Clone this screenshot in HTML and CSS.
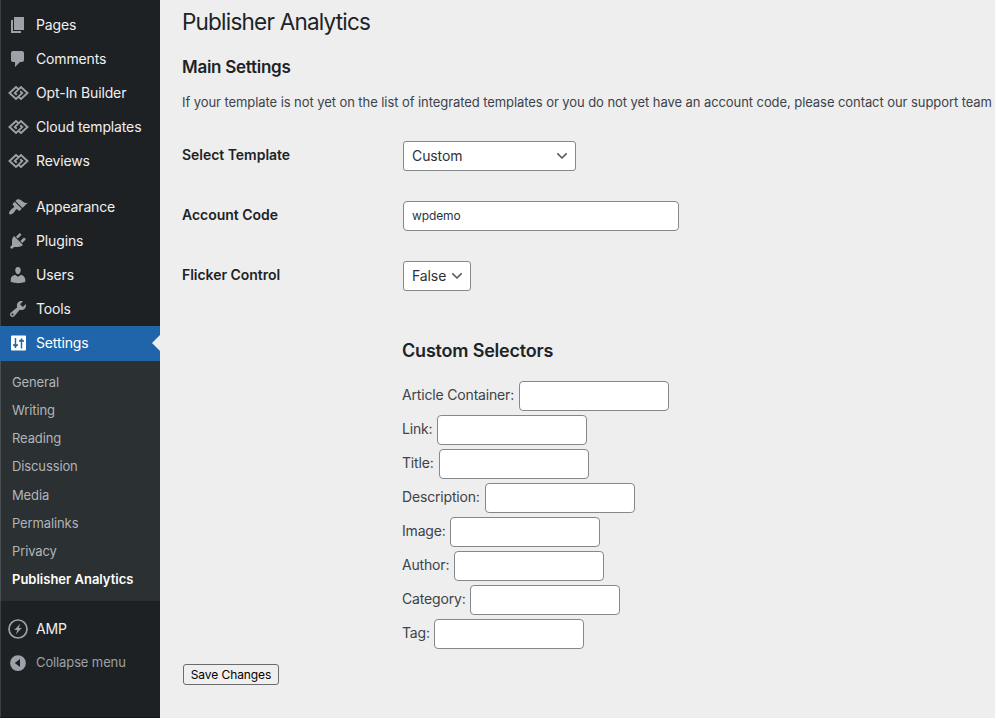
FILE: index.html
```html
<!DOCTYPE html>
<html lang="en">
<head>
<meta charset="utf-8">
<title>Publisher Analytics</title>
<link rel="stylesheet" href="styles.css">
</head>
<body>
<svg class="defs" width="0" height="0">
  <symbol id="links" viewBox="0 0 21 20"><path d="M10.300 6 8 4.100 1.500 10 8 15.900 14.200 10.100 12.200 8.300M10.700 14 13 15.900 19.500 10 13 4.100 6.800 9.900 8.800 11.700" fill="none" stroke="currentColor" stroke-width="1.900"/></symbol>
  <symbol id="chevron" viewBox="0 0 20 20"><path d="m4.200 6.700 5.800 5.800 5.800-5.800" fill="none" stroke="#50575e" stroke-width="1.900"/></symbol>
</svg>
<div class="admin">
  <nav class="sidebar">
    <ul class="menu">
      <li><svg class="icon" viewBox="0 0 20 20"><path d="M6 15V2h10v13H6zm-1 1h8v2H3V5h2v11z"/></svg><span>Pages</span></li>
      <li><svg class="icon" viewBox="0 0 20 20"><path d="M5 2h9c1.100 0 2 .9 2 2v7c0 1.100-.9 2-2 2h-2l-5 5v-5H5c-1.100 0-2-.9-2-2V4c0-1.100.9-2 2-2z"/></svg><span>Comments</span></li>
      <li><svg class="icon links"><use href="#links"/></svg><span>Opt-In Builder</span></li>
      <li><svg class="icon links"><use href="#links"/></svg><span>Cloud templates</span></li>
      <li><svg class="icon links"><use href="#links"/></svg><span>Reviews</span></li>
      <li class="gap"><svg class="icon" viewBox="0 0 20 20"><path d="M14.480 11.060 7.410 3.990l1.500-1.500c.5-.56 2.300-.47 3.510.32 1.210.8 1.430 1.280 2.910 2.100 1.180.64 2.450 1.260 4.450.85zm-.71.71L6.700 4.700 4.930 6.470c-.39.39-.39 1.020 0 1.410l1.060 1.060c.39.39.39 1.030 0 1.420-.6.6-1.430 1.110-2.210 1.690-.35.26-.7.53-1.010.84C1.430 14.230.4 16.080 1.400 17.070c.99 1 2.840-.03 4.180-1.360.31-.31.58-.66.85-1.020.57-.78 1.080-1.610 1.690-2.210.39-.39 1.020-.39 1.410 0l1.060 1.060c.39.39 1.020.39 1.410 0z"/></svg><span>Appearance</span></li>
      <li><svg class="icon" viewBox="0 0 20 20"><path d="M13.110 4.360 9.870 7.600 8 5.730l3.240-3.240c.35-.34 1.050-.2 1.560.32.52.51.66 1.210.31 1.550zm-8 1.770.91-1.120 9.010 9.010-1.190.84c-.71.71-2.630 1.160-3.820 1.160H6.140L4.900 17.260c-.59.59-1.540.59-2.120 0-.59-.58-.59-1.530 0-2.120l1.240-1.240v-3.880c0-1.130.4-3.190 1.090-3.890zm7.260 3.970 3.240-3.240c.34-.35 1.040-.21 1.550.31.52.51.66 1.210.31 1.550l-3.240 3.250z"/></svg><span>Plugins</span></li>
      <li><svg class="icon" viewBox="0 0 20 20"><path d="M10 9.250c-2.270 0-2.730-3.440-2.730-3.440C7 4.020 7.820 2 9.970 2c2.160 0 2.980 2.020 2.710 3.810 0 0-.41 3.440-2.680 3.440zm0 2.570L12.720 10c2.390 0 4.520 2.330 4.520 4.530v2.490s-3.650 1.130-7.240 1.130c-3.650 0-7.240-1.130-7.240-1.130v-2.490c0-2.250 1.940-4.480 4.470-4.480z"/></svg><span>Users</span></li>
      <li><svg class="icon" viewBox="0 0 20 20"><path d="M16.680 9.770c-1.340 1.340-3.300 1.670-4.950.99l-5.410 6.520c-.99.99-2.590.99-3.580 0s-.99-2.590 0-3.570l6.520-5.420c-.68-1.650-.35-3.610.99-4.950 1.280-1.280 3.120-1.620 4.720-1.060l-2.890 2.890 2.820 2.820 2.860-2.870c.53 1.580.18 3.390-1.080 4.650zM3.810 16.210c.4.39 1.040.39 1.430 0 .4-.4.4-1.040 0-1.430-.39-.4-1.030-.4-1.430 0-.39.39-.39 1.030 0 1.430z"/></svg><span>Tools</span></li>
      <li class="current"><svg class="icon" viewBox="0 0 20 20"><rect x="3" y="2.500" width="15" height="15" rx="1"/><path d="M7.500 5v10M5 12h5M13.500 5.500v10M11 8h5" fill="none" stroke="#2065a9" stroke-width="1.400"/><path d="m5.300 12 2.200 2.500L9.700 12zM11.300 8l2.200-2.500L15.700 8z" fill="#2065a9"/></svg><span>Settings</span></li>
    </ul>
    <ul class="submenu">
      <li>General</li>
      <li>Writing</li>
      <li>Reading</li>
      <li>Discussion</li>
      <li>Media</li>
      <li>Permalinks</li>
      <li>Privacy</li>
      <li class="active">Publisher Analytics</li>
    </ul>
    <ul class="menu tail">
      <li><svg class="icon" viewBox="0 0 20 20"><circle cx="10" cy="10" r="9" fill="none" stroke="currentColor" stroke-width="1.700"/><path d="M12.200 4.800 6.300 10.900h3l-1.400 4.300 5.900-6.200h-3z"/></svg><span>AMP</span></li>
      <li class="collapse"><svg class="icon" viewBox="0 0 20 20"><path fill-rule="evenodd" d="M10 2.200a7.900 7.900 0 1 0 0 15.800 7.900 7.900 0 0 0 0-15.800zM12 6v8l-5.200-4z"/></svg><span>Collapse menu</span></li>
    </ul>
  </nav>
  <main class="content">
    <h1>Publisher Analytics</h1>
    <h2 class="main-title">Main Settings</h2>
    <p class="intro">If your template is not yet on the list of integrated templates or you do not yet have an account code, please contact our support team</p>
    <form>
      <div class="row"><label for="template">Select Template</label>
        <div class="select wide"><select id="template"><option>Custom</option></select><svg><use href="#chevron"/></svg></div></div>
      <div class="row"><label for="account">Account Code</label>
        <input class="account" id="account" type="text" value="wpdemo"></div>
      <div class="row"><label for="flicker">Flicker Control</label>
        <div class="select narrow"><select id="flicker"><option>False</option></select><svg><use href="#chevron"/></svg></div></div>
      <section class="selectors">
        <h2>Custom Selectors</h2>
        <div class="field f-article"><label for="a">Article Container:</label><input id="a" type="text"></div>
        <div class="field f-link"><label for="b">Link:</label><input id="b" type="text"></div>
        <div class="field f-title"><label for="c">Title:</label><input id="c" type="text"></div>
        <div class="field f-desc"><label for="d">Description:</label><input id="d" type="text"></div>
        <div class="field f-image"><label for="e">Image:</label><input id="e" type="text"></div>
        <div class="field f-author"><label for="f">Author:</label><input id="f" type="text"></div>
        <div class="field f-category"><label for="g">Category:</label><input id="g" type="text"></div>
        <div class="field f-tag"><label for="h">Tag:</label><input id="h" type="text"></div>
      </section>
      <button type="button">Save Changes</button>
    </form>
  </main>
</div>
</body>
</html>
```
FILE: styles.css
```css
* { box-sizing: border-box; }
body { margin: 0; background: #eeeeee; color: #3c434a; font: 13px/1.4 Inter, "Liberation Sans", sans-serif; overflow: hidden; }
ul { list-style: none; margin: 0; padding: 0; }
.defs { display: block; position: absolute; }
.admin { display: flex; height: 718px; }

.sidebar { flex: none; width: 160px; background: #1d2124; border-bottom: 1px solid #15181a; box-shadow: inset 1px 0 #3d4144; padding-top: 8px; }
.menu li { display: flex; align-items: center; height: 34.050px; padding-left: 8px; gap: 8px; font-size: 14px; letter-spacing: -0.14px; color: #f0f0f1; white-space: nowrap; }
.menu .gap { margin-top: 11.850px; }
.icon { flex: none; width: 20px; height: 20px; color: #9ca2a7; fill: currentColor; }
.links { width: 21px; margin-right: -1px; }
.menu .current { height: 35px; background: #2065a9; color: #fff; position: relative; }
.current span { margin-top: -1px; }
.current .icon { color: #fff; margin-top: -1px; }
.current::after { content: ""; position: absolute; right: 0; top: 9px; border: 8px solid transparent; border-left: 0; border-right-color: #eee; }
.submenu { background: #2b3033; height: 240px; padding-top: 6.800px; box-shadow: inset 1px 0 #4a4f52; }
.submenu li { height: 28.140px; padding-left: 12px; display: flex; align-items: center; letter-spacing: -0.12px; color: #b1b5b9; white-space: nowrap; }
.submenu .active { color: #fff; font-weight: 600; letter-spacing: 0; }
.tail { padding-top: 11px; }
.menu .collapse { color: #9ca1a6; font-size: 13px; letter-spacing: -0.12px; }
.collapse span { margin-top: -2px; }

.content { flex: 1; min-width: 0; padding: 7px 0 0 22px; white-space: nowrap; }
h1 { margin: 0; font-size: 22.500px; font-weight: 400; line-height: 30px; letter-spacing: -0.78px; color: #1d2327; }
h2 { margin: 0; color: #1d2327; font-weight: 600; }
.main-title { margin-top: 18px; font-size: 17px; line-height: 24px; letter-spacing: -0.27px; }
.intro { margin: 13px 0 0; line-height: 20px; letter-spacing: -0.073px; }
form { display: flex; flex-direction: column; align-items: flex-start; padding-top: 29px; }
.row { display: grid; grid-template-columns: 221px auto; height: 60px; }
.row label { font-size: 14px; font-weight: 600; color: #1d2327; line-height: 28px; letter-spacing: -0.03px; }
input, select { height: 30px; margin: 0; border: 1px solid #84878c; border-radius: 4px; background: #fff; color: #2c3338; font: 14px Inter, "Liberation Sans", sans-serif; padding: 0 8px; }
.account { width: 276px; font-size: 12px; padding-bottom: 1px; letter-spacing: -0.1px; }
.select { display: grid; height: 30px; }
.select > * { grid-area: 1 / 1; }
select { appearance: none; width: 100%; border-radius: 3px; padding-bottom: 2px; letter-spacing: -0.1px; }
.select svg { width: 16px; height: 16px; place-self: center end; margin-right: 6px; pointer-events: none; }
.wide { width: 173px; }
.narrow { width: 68px; }
.selectors { margin: 18px 0 0 220px; }
.selectors h2 { font-size: 18px; line-height: 24px; margin-bottom: 18px; letter-spacing: -0.2px; }
.field { display: flex; height: 34px; font-size: 14px; line-height: 28px; letter-spacing: -0.17px; }
.field label { width: var(--w); }
.field input { width: 150px; }
.f-article { --w: 117px; }
.f-link { --w: 35px; }
.f-title { --w: 37px; }
.f-desc { --w: 83px; }
.f-image { --w: 48px; }
.f-author { --w: 52px; }
.f-category { --w: 68px; }
.f-tag { --w: 32px; }
button { margin: 11px 0 0 1px; width: 96px; height: 21px; padding: 0; border: 1px solid #6b6b6b; border-radius: 3px; background: #efefef; color: #000; font: 12px Inter, "Liberation Sans", sans-serif; letter-spacing: -0.08px; }
```
